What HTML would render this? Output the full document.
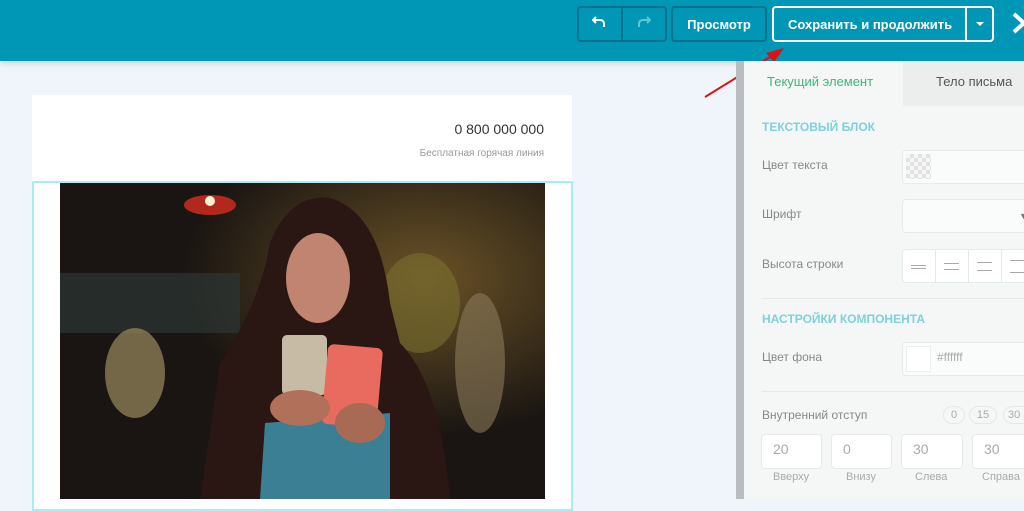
<!DOCTYPE html>
<html><head><meta charset="utf-8"><style>
*{box-sizing:border-box;margin:0;padding:0}
body{width:1024px;height:499px;overflow:hidden;position:relative;background:#f0f4fb;font-family:"Liberation Sans",sans-serif}
.hdr{position:absolute;left:0;top:0;width:1024px;height:61px;background:#0097b7;box-shadow:0 2px 6px rgba(0,0,0,.15)}
.btn{position:absolute;top:6px;height:36px;border:2px solid #04708a;border-radius:4px;color:#fff;font-size:13px;font-weight:bold;display:flex;align-items:center;justify-content:center}
.lbl{position:absolute;left:762px;font-size:12px;color:#888}
.sec{position:absolute;left:762px;font-size:12px;font-weight:bold;color:#7fd0dc}
.inp{position:absolute;background:#fafbfb;border:1px solid #e6eaea;border-radius:4px}
.hr{position:absolute;left:762px;width:262px;height:1px;background:#e3e8e8}
.sm{position:absolute;color:#aaa;font-size:14px}
.ln{position:absolute;box-sizing:content-box;width:15px;border-top:1px solid #aaa;border-bottom:1px solid #aaa}
</style></head><body>
<div class="hdr">
 <div class="btn" style="left:577px;width:90px;border-color:#05708b"></div>
 <div style="position:absolute;left:621px;top:8px;width:2px;height:32px;background:#05708b"></div>
 <svg style="position:absolute;left:592px;top:15px" width="14" height="14" viewBox="0 0 14 14"><path d="M4 2L1 5L4 8M1 5H8Q12 5 12 9V12" fill="none" stroke="#fff" stroke-width="2"/></svg>
 <svg style="position:absolute;left:637px;top:15px" width="14" height="14" viewBox="0 0 14 14"><path d="M10 2L13 5L10 8M13 5H6Q2 5 2 9V12" fill="none" stroke="#5cc5d6" stroke-width="2"/></svg>
 <div class="btn" style="left:671px;width:96px">Просмотр</div>
 <div class="btn" style="left:772px;width:222px;border-color:#fff;justify-content:flex-start;padding-left:14px">Сохранить и продолжить</div>
 <div style="position:absolute;left:965px;top:7px;width:2px;height:34px;background:#fff"></div>
 <div style="position:absolute;left:976px;top:22px;border:4px solid transparent;border-top:4px solid #fff"></div>
 <svg style="position:absolute;left:1012px;top:12px" width="14" height="22"><path d="M2 2L12 11L2 20" fill="none" stroke="#fff" stroke-width="4"/></svg>
</div>
<svg style="position:absolute;left:700px;top:40px" width="90" height="60"><path d="M5 57L78 12" stroke="#e01010" stroke-width="2"/><path d="M84 8L66 13L74 22Z" fill="#e01010"/></svg>
<div style="position:absolute;left:32px;top:95px;width:540px;height:86px;background:#fff"></div>
<div style="position:absolute;left:0;top:121px;width:544px;text-align:right;font-size:14px;color:#333">0 800 000 000</div>
<div style="position:absolute;left:0;top:148px;width:544px;text-align:right;font-size:10px;color:#999">Бесплатная горячая линия</div>
<div style="position:absolute;left:32px;top:181px;width:541px;height:330px;background:#fff;border:2px solid #a8ecf6"></div>
<svg style="position:absolute;left:60px;top:183px" width="485" height="316" viewBox="0 0 485 316">
<defs><radialGradient id="g" cx="0.75" cy="0.3" r="0.5"><stop offset="0" stop-color="#6a5226"/><stop offset="1" stop-color="#1a1512"/></radialGradient></defs>
<rect width="485" height="316" fill="url(#g)"/>
<rect x="0" y="90" width="180" height="60" fill="#2c3634" opacity=".7"/>
<ellipse cx="150" cy="22" rx="26" ry="10" fill="#b2281c"/><circle cx="150" cy="18" r="5" fill="#fff3d0"/>
<ellipse cx="75" cy="190" rx="30" ry="45" fill="#9a8a60" opacity=".7"/>
<ellipse cx="420" cy="180" rx="25" ry="70" fill="#8a7a5a" opacity=".6"/>
<ellipse cx="360" cy="120" rx="40" ry="50" fill="#7a7030" opacity=".6"/>
<path d="M140 316L160 180Q200 120 210 60Q230 10 270 15Q320 30 330 120L340 160Q380 200 390 316Z" fill="#2a1612"/>
<ellipse cx="258" cy="95" rx="32" ry="45" fill="#c08470"/>
<path d="M200 316L205 240L330 230L330 316Z" fill="#3a7f94"/>
<rect x="222" y="152" width="45" height="60" rx="5" fill="#c8bba5"/>
<rect x="265" y="163" width="55" height="80" rx="6" fill="#e96a5e" transform="rotate(5 292 200)"/>
<ellipse cx="240" cy="225" rx="30" ry="18" fill="#b0705a"/><ellipse cx="300" cy="240" rx="25" ry="20" fill="#a86a55"/>
</svg>
<div style="position:absolute;left:736px;top:61px;width:8px;height:438px;background:#b9bcc0"></div>
<div style="position:absolute;left:744px;top:61px;width:280px;height:438px;background:#f5f7f7"></div>
<div style="position:absolute;left:903px;top:61px;width:121px;height:45px;background:#eceeee"></div>
<div style="position:absolute;left:767px;top:74px;font-size:13px;color:#3cb878">Текущий элемент</div>
<div style="position:absolute;left:936px;top:74px;font-size:13px;color:#555">Тело письма</div>
<div class="sec" style="top:120px">ТЕКСТОВЫЙ БЛОК</div>
<div class="lbl" style="top:158px">Цвет текста</div>
<div class="inp" style="left:902px;top:150px;width:130px;height:34px"></div>
<div style="position:absolute;left:906px;top:154px;width:25px;height:25px;background:repeating-conic-gradient(#e2e2e2 0 25%,#f6f6f6 0 50%) 0 0/8px 8px"></div>
<div class="lbl" style="top:207px">Шрифт</div>
<div class="inp" style="left:902px;top:199px;width:130px;height:34px"></div>
<div style="position:absolute;left:1019px;top:211px;font-size:9px;color:#777">▼</div>
<div class="lbl" style="top:257px">Высота строки</div>
<div class="inp" style="left:902px;top:249px;width:130px;height:34px;background:#fff"></div>
<div style="position:absolute;left:935px;top:249px;width:1px;height:34px;background:#e6eaea"></div>
<div style="position:absolute;left:968px;top:249px;width:1px;height:34px;background:#e6eaea"></div>
<div style="position:absolute;left:1001px;top:249px;width:1px;height:34px;background:#e6eaea"></div>
<div class="ln" style="left:911px;top:265px;height:2px"></div>
<div class="ln" style="left:944px;top:263px;height:5px"></div>
<div class="ln" style="left:977px;top:262px;height:7px"></div>
<div class="ln" style="left:1010px;top:260px;height:11px"></div>
<div class="hr" style="top:298px"></div>
<div class="sec" style="top:312px">НАСТРОЙКИ КОМПОНЕНТА</div>
<div class="lbl" style="top:350px">Цвет фона</div>
<div class="inp" style="left:902px;top:342px;width:130px;height:34px"></div>
<div style="position:absolute;left:906px;top:346px;width:25px;height:26px;background:#fff;border:1px solid #eee"></div>
<div style="position:absolute;left:937px;top:350px;font-size:12px;color:#aaa">#ffffff</div>
<div class="hr" style="top:391px"></div>
<div class="lbl" style="top:408px">Внутренний отступ</div>
<div style="position:absolute;left:943px;top:406px;width:22px;height:18px;border:1px solid #e4e8e8;border-radius:9px;font-size:11px;color:#aaa;text-align:center;line-height:16px">0</div>
<div style="position:absolute;left:969px;top:406px;width:28px;height:18px;border:1px solid #e4e8e8;border-radius:9px;font-size:11px;color:#aaa;text-align:center;line-height:16px">15</div>
<div style="position:absolute;left:1003px;top:406px;width:28px;height:18px;border:1px solid #e4e8e8;border-radius:9px;font-size:11px;color:#aaa;padding-left:4px;line-height:16px">30</div>
<div class="inp" style="left:761px;top:434px;width:61px;height:35px;background:#fff"></div><div class="sm" style="left:773px;top:441px">20</div>
<div class="inp" style="left:831px;top:434px;width:61px;height:35px;background:#fff"></div><div class="sm" style="left:843px;top:441px">0</div>
<div class="inp" style="left:901px;top:434px;width:62px;height:35px;background:#fff"></div><div class="sm" style="left:913px;top:441px">30</div>
<div class="inp" style="left:972px;top:434px;width:62px;height:35px;background:#fff"></div><div class="sm" style="left:984px;top:441px">30</div>
<div style="position:absolute;left:773px;top:471px;font-size:11px;color:#aaa">Вверху</div>
<div style="position:absolute;left:846px;top:471px;font-size:11px;color:#aaa">Внизу</div>
<div style="position:absolute;left:915px;top:471px;font-size:11px;color:#aaa">Слева</div>
<div style="position:absolute;left:982px;top:471px;font-size:11px;color:#aaa">Справа</div>
</body></html>
